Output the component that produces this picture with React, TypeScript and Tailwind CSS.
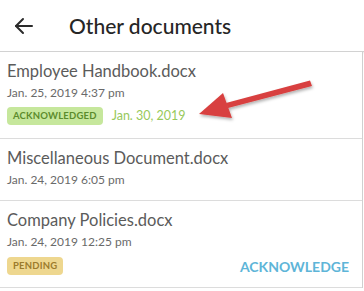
import type { ReactNode } from "react";

type Doc = {
  name: string;
  date: string;
  footer?: ReactNode;
};

function BackArrow() {
  return (
    <svg width="20" height="18" viewBox="0 0 20 18" fill="none" stroke="#2b2b2b" strokeWidth="2" strokeLinecap="round" strokeLinejoin="round">
      <path d="M18 9H2" />
      <path d="M9 2L2 9l7 7" />
    </svg>
  );
}

function Badge({ children, className }: { children: ReactNode; className: string }) {
  return (
    <span className={`inline-flex h-[18px] items-center rounded-[4px] px-[6px] text-[9.5px] font-bold tracking-[0.2px] ${className}`}>
      {children}
    </span>
  );
}

function DocRow({ name, date, footer }: Doc) {
  return (
    <div className="border-b border-[#dcdcdc] bg-white px-[7px] pt-[8px] pb-[12px] last:pb-[10px]">
      <div className="text-[16.5px] leading-[22px] text-[#5b5b5b]">{name}</div>
      <div className="mt-[3px] text-[12px] leading-[16px] text-[#6a6a6a]">{date}</div>
      {footer && <div className="mt-[6px] flex items-center">{footer}</div>}
    </div>
  );
}

export default function App() {
  const docs: Doc[] = [
    {
      name: "Employee Handbook.docx",
      date: "Jan. 25, 2019 4:37 pm",
      footer: (
        <>
          <Badge className="bg-[#c6e79c] text-[#5c8c2c]">ACKNOWLEDGED</Badge>
          <span className="ml-[9px] text-[12.5px] text-[#97c95b]">Jan. 30, 2019</span>
        </>
      ),
    },
    {
      name: "Miscellaneous Document.docx",
      date: "Jan. 24, 2019 6:05 pm",
    },
    {
      name: "Company Policies.docx",
      date: "Jan. 24, 2019 12:25 pm",
      footer: (
        <>
          <Badge className="bg-[#eed78f] text-[#9c7b2c]">PENDING</Badge>
          <span className="ml-auto pr-[6px] text-[14px] font-bold text-[#5eb5d8]">ACKNOWLEDGE</span>
        </>
      ),
    },
  ];

  return (
    <div className="relative h-[291px] w-[364px] overflow-hidden bg-white font-['Lato',sans-serif]">
      <header className="flex h-[52px] items-center border-b border-[#d2d2d2] shadow-[0_1px_2px_rgba(0,0,0,0.12)]">
        <div className="ml-[14px] flex w-[20px] items-center">
          <BackArrow />
        </div>
        <h1 className="ml-[35px] text-[21px] font-medium text-[#262626]">Other documents</h1>
      </header>
      <div className="mr-[1px] border-r border-[#d0d0d0]">
        {docs.map((d) => (
          <DocRow key={d.name} {...d} />
        ))}
      </div>
      <svg className="pointer-events-none absolute left-0 top-0" width="364" height="291">
        <defs>
          <filter id="sh" x="-20%" y="-50%" width="140%" height="200%">
            <feDropShadow dx="1" dy="2" stdDeviation="1.5" floodColor="#000" floodOpacity="0.3" />
          </filter>
        </defs>
        <g filter="url(#sh)" fill="#d8403f">
          <path d="M310 80.5 L312 86 L228 108 L226 103 Z" />
          <path d="M199 114 L223 93 L232 118 Z" />
        </g>
      </svg>
    </div>
  );
}
